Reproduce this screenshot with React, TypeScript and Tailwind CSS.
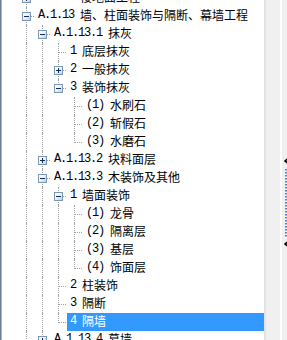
import React from "react";

type Row = {
  level: number;
  prefix: string;
  text: string;
  box?: "+" | "-";
  last?: boolean;
  guides: number[];
  selected?: boolean;
};

const ROWS: Row[] = [
  { level: 0, prefix: "A.1.12 ", text: "楼地面工程", box: "+", guides: [] },
  { level: 0, prefix: "A.1.13 ", text: "墙、柱面装饰与隔断、幕墙工程", box: "-", guides: [] },
  { level: 1, prefix: "A.1.13.1 ", text: "抹灰", box: "-", guides: [0] },
  { level: 2, prefix: "1 ", text: "底层抹灰", guides: [0, 1] },
  { level: 2, prefix: "2 ", text: "一般抹灰", box: "+", guides: [0, 1] },
  { level: 2, prefix: "3 ", text: "装饰抹灰", box: "-", last: true, guides: [0, 1] },
  { level: 3, prefix: "(1) ", text: "水刷石", guides: [0, 1] },
  { level: 3, prefix: "(2) ", text: "斩假石", guides: [0, 1] },
  { level: 3, prefix: "(3) ", text: "水磨石", last: true, guides: [0, 1] },
  { level: 1, prefix: "A.1.13.2 ", text: "块料面层", box: "+", guides: [0] },
  { level: 1, prefix: "A.1.13.3 ", text: "木装饰及其他", box: "-", guides: [0] },
  { level: 2, prefix: "1 ", text: "墙面装饰", box: "-", guides: [0, 1] },
  { level: 3, prefix: "(1) ", text: "龙骨", guides: [0, 1, 2] },
  { level: 3, prefix: "(2) ", text: "隔离层", guides: [0, 1, 2] },
  { level: 3, prefix: "(3) ", text: "基层", guides: [0, 1, 2] },
  { level: 3, prefix: "(4) ", text: "饰面层", last: true, guides: [0, 1, 2] },
  { level: 2, prefix: "2 ", text: "柱装饰", guides: [0, 1] },
  { level: 2, prefix: "3 ", text: "隔断", guides: [0, 1] },
  { level: 2, prefix: "4 ", text: "隔墙", last: true, guides: [0, 1], selected: true },
  { level: 1, prefix: "A.1.13.4 ", text: "幕墙", box: "+", guides: [0] },
];

function ExpandBox({ kind }: { kind: "+" | "-" }) {
  return (
    <div className="absolute left-[4px] top-[5px] h-[9px] w-[9px] border border-[#7898b5] bg-[linear-gradient(135deg,#ffffff_0%,#f0f2f5_45%,#c6d2e0_100%)]">
      <div className="absolute left-[1px] top-[3px] h-px w-[5px] bg-[#1a2b4a]" />
      {kind === "+" && <div className="absolute left-[3px] top-[1px] h-[5px] w-px bg-[#1a2b4a]" />}
    </div>
  );
}

function TreeRow({ row }: { row: Row }) {
  const cells = [];
  for (let i = 0; i < row.level; i++) {
    cells.push(
      <div key={i} className="relative w-4 shrink-0">
        {row.guides.includes(i) && (
          <div className="absolute left-2 top-0 bottom-0 border-l border-dotted border-[#a0a0a0]" />
        )}
      </div>
    );
  }
  return (
    <div className="flex h-[18px] items-stretch">
      {cells}
      <div className="relative w-4 shrink-0">
        <div
          className={
            "absolute left-2 top-0 border-l border-dotted border-[#a0a0a0] " +
            (row.last ? "h-[10px]" : "bottom-0")
          }
        />
        <div className="absolute left-[9px] right-0 top-[9px] border-t border-dotted border-[#a0a0a0]" />
        {row.box && <ExpandBox kind={row.box} />}
      </div>
      <div
        className={
          "ml-px flex items-center whitespace-nowrap px-[2px] pb-[2px] " +
          (row.selected
            ? "flex-1 border border-dotted border-[#c8731e] bg-[#3399ff] text-white"
            : "border border-transparent text-black")
        }
      >
        <span className="font-['Liberation_Mono',monospace] text-[12px] tracking-[-1.2px]">
          {row.prefix.replace(/ /g, "\u00a0")}
        </span>
        <span className="font-['Noto_Sans_CJK_SC','Noto_Sans',sans-serif] text-[12px]">{row.text}</span>
      </div>
    </div>
  );
}

export default function App() {
  return (
    <div className="flex h-[340px] w-[287px] overflow-hidden bg-white">
      <div className="w-px shrink-0 bg-[#6d7f99]" />
      <div className="w-px shrink-0 bg-[#a9b6c8]" />
      <div className="flex-1 overflow-hidden pl-4">
        <div className="mt-[-11px] flex flex-col">
          {ROWS.map((r, i) => (
            <TreeRow key={i} row={r} />
          ))}
        </div>
      </div>
      <div className="flex w-[23px] shrink-0">
        <div className="w-[2px] bg-[#e3e3e3]" />
        <div className="w-[14px] bg-[#f0f0f0]" />
        <div className="w-[2px] bg-white" />
        <div className="flex flex-1 flex-col items-end bg-[#f0f0f0] pt-[158px]">
          <svg width="5" height="90" viewBox="0 0 5 90" className="block">
            <path d="M3 3 L5 1 M3 3 L5 5 M2 3 H5" stroke="#000" strokeWidth="1.2" fill="none" />
            {Array.from({ length: 23 }).map((_, i) => (
              <rect key={i} x="3" y={11 + i * 3} width="2" height="1.5" fill="#4a86d8" />
            ))}
            <path d="M3 86 L5 84 M3 86 L5 88 M2 86 H5" stroke="#000" strokeWidth="1.2" fill="none" />
          </svg>
        </div>
      </div>
    </div>
  );
}
